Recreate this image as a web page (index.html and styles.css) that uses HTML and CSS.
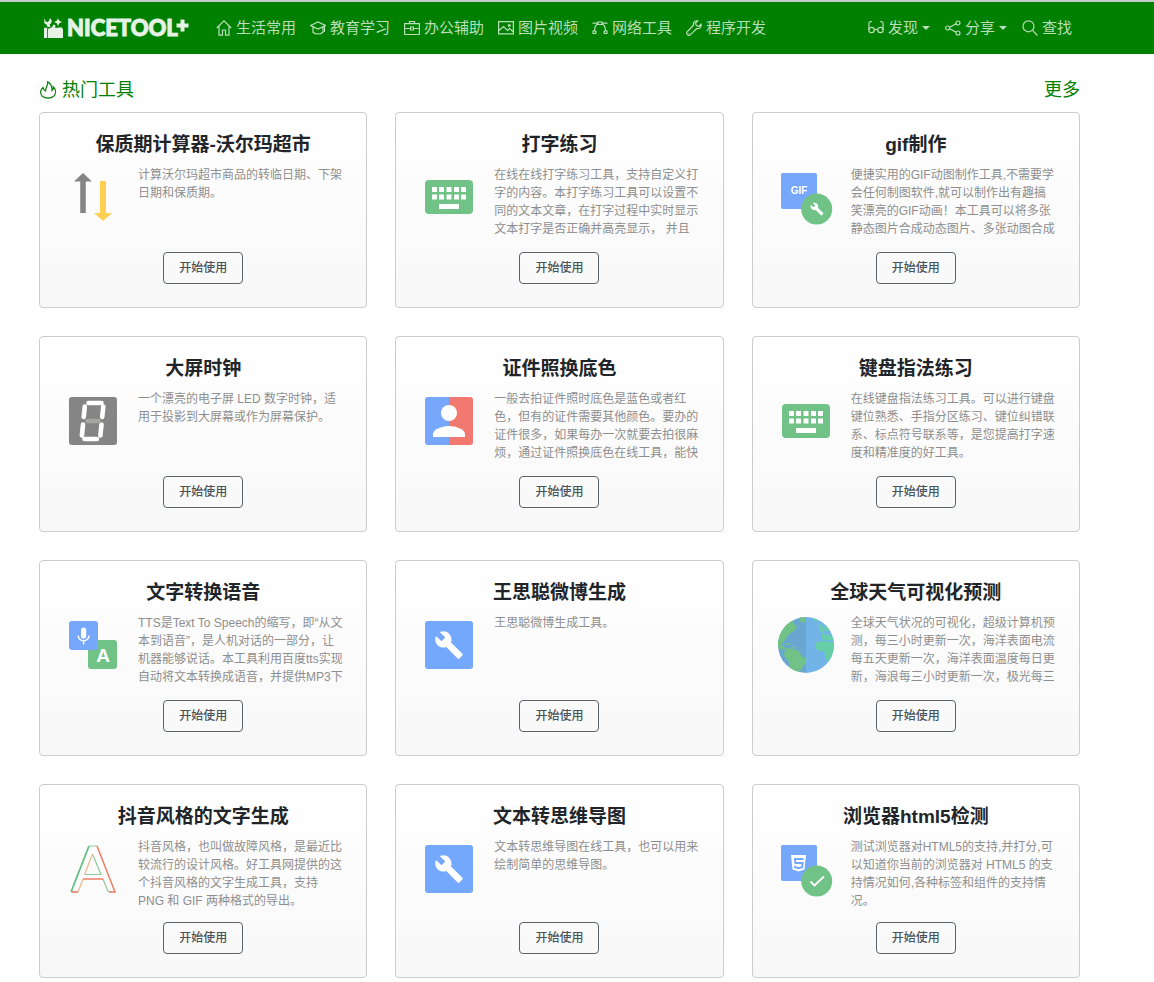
FILE: index.html
```html
<!DOCTYPE html>
<html lang="zh-CN">
<head>
<meta charset="utf-8">
<meta name="viewport" content="width=device-width, initial-scale=1">
<title>NICETOOL+ 好工具网</title>
<link rel="stylesheet" href="styles.css">
</head>
<body>
<svg class="symbols" aria-hidden="true">
  <symbol id="build" viewBox="0 0 24 24"><path fill="#fff" d="M22.7 19l-9.1-9.1c.9-2.3.4-5-1.5-6.9-2-2-5-2.4-7.4-1.3L9 6 6 9 1.6 4.7C.4 7.1.9 10.1 2.9 12.1c1.9 1.9 4.6 2.4 6.9 1.5l9.1 9.1c.4.4 1 .4 1.4 0l2.3-2.3c.5-.4.5-1.1.1-1.4z"/></symbol>
  <symbol id="keyboard" viewBox="0 0 56 56"><rect x="4" y="11" width="48" height="34" rx="4" fill="#71c287"/><path fill="#fff" d="M11 18h5v5h-5zM18 18h5v5h-5zM25.500 18h5v5h-5zM33 18h5v5h-5zM40 18h5v5h-5zM11 25.500h5v5h-5zM18 25.500h5v5h-5zM25.500 25.500h5v5h-5zM33 25.500h5v5h-5zM40 25.500h5v5h-5zM18 35h20v5H18z"/></symbol>
  <symbol id="tool" viewBox="0 0 56 56"><rect x="4" y="4" width="48" height="48" rx="3" fill="#74a8fd"/><use href="#build" x="13" y="13" width="30" height="30"/></symbol>
</svg>

<header class="site-header">
  <div class="container header-inner">
    <a class="brand" href="#">
      <svg class="brand-mark" viewBox="0 0 19 21" fill="currentColor" aria-hidden="true"><path d="M.5 0l1 3 1.500 1.200L5 3 6 0l1.800 2.500-.6 2.600-1.600 1.600 1 2.300H3.600L2.600 6.800.2 5zM14 .2l1.200 2.600 3 1.200-3 1.300L14 8l-1.200-2.700L10 4l2.800-1.200zM0 9.800h3.200V20H0zM4 11l4.200-2 1.300-2.500 1.900.8-.2 2.700 6.300-.8 1.700 2.300V20H4z"/></svg>
      <span class="brand-name">NICETOOL</span>
      <svg class="brand-plus" viewBox="0 0 13 13" fill="currentColor" aria-label="+"><path d="M4.500.5h4v4h4v4h-4v4h-4v-4h-4v-4h4z"/></svg>
    </a>
    <nav class="nav" aria-label="工具分类">
      <a href="#"><svg class="ico" viewBox="0 0 16 16"><path d="M.8 8L8 .9 15.200 8M3 6.500v8.700h3.500V10h3v5.200H13V6.500"/></svg>生活常用</a>
      <a href="#"><svg class="ico" viewBox="0 0 16 16"><path d="M.6 5.500L8 2l7.400 3.500L8 9zM3 7v5.200c2.500 2.400 7.500 2.400 10 0V7M14.500 6v6"/></svg>教育学习</a>
      <a href="#"><svg class="ico" viewBox="0 0 16 16"><path d="M.6 3.600h14.800v10.900H.6zM5.500 3.500v-2h5v2M.6 8.500h6M9.400 8.500h6M6.600 7h2.800v3H6.600z"/></svg>办公辅助</a>
      <a href="#"><svg class="ico" viewBox="0 0 16 16"><path d="M.6 1.600h14.800v12.200H.6zM1 10.500l4.500-4 4 4 2-2 4 3.500M10.500 4.800h1.500v1.400h-1.500z"/></svg>图片视频</a>
      <a href="#"><svg class="ico" viewBox="0 0 16 16"><path d="M6 2h4v2.500H6zM1 11h2.800v2.500H1zM12.200 11H15v2.500h-2.800zM6.500 3.500C4 4.500 2.500 7 2.400 11M9.500 3.500c2.500 1 4 3.500 4.100 7.500M.5 3.200H6M10 3.200h5.500"/></svg>网络工具</a>
      <a href="#"><svg class="ico" viewBox="0 0 16 16"><path d="M11.800.9c-2.500-.7-5 1.600-4.300 4.300L.9 12c-.9 2 1.100 4 3.100 3.100l6.800-6.600c2.700.7 5.100-1.800 4.300-4.300l-2.400 2.300-2.300-.9-.9-2.300zM2.500 13.500h1"/></svg>程序开发</a>
    </nav>
    <nav class="nav nav-end" aria-label="站点">
      <a href="#"><svg class="ico" viewBox="0 0 16 16"><path d="M3.800 1.600H2.400Q.9 1.600.9 3.500V10M12.200 1.600h1.400q1.500 0 1.500 1.900V10M6.300 10q1.700-1.200 3.400 0"/><circle cx="3.600" cy="10" r="2.700"/><circle cx="12.400" cy="10" r="2.700"/></svg>发现<span class="caret"></span></a>
      <a href="#"><svg class="ico" viewBox="0 0 16 16"><circle cx="2.700" cy="8" r="2"/><circle cx="13" cy="3" r="2"/><circle cx="13" cy="13" r="2"/><path d="M4.600 7.200L11 3.900M4.600 8.800L11 12.100"/></svg>分享<span class="caret"></span></a>
      <a href="#"><svg class="ico" viewBox="0 0 16 16"><circle cx="6.500" cy="6.300" r="5.500"/><path d="M10.500 10.300l5 5.200"/></svg>查找</a>
    </nav>
  </div>
</header>

<main class="container">
  <div class="section-head">
    <h2><svg class="ico ico-fire" viewBox="0 0 18 18"><path d="M4 6.500C1.500 8.500.7 12 3 14.800c2.800 3.100 9.200 3.100 12 0 2.300-2.700 1.900-6.300-.6-8.800.2 1.700-.4 2.900-1.400 3.600C13.200 6 11.500 2.200 8.600.9c.7 3-1.800 4.500-2 9.100C5.300 9.300 4.300 8.300 4 6.500z"/></svg>热门工具</h2>
    <a href="#">更多</a>
  </div>

  <section class="tools">
    <article class="card">
      <h3>保质期计算器-沃尔玛超市</h3>
      <div class="card-body">
        <svg class="pic" viewBox="0 0 56 56"><path fill="#858585" d="M18 4l9 8.500h-6.200V44h-5.600V12.500H9z"/><path fill="#ffd054" d="M35 12h6v32h6l-9 8-9-8h6z"/></svg>
        <p>计算沃尔玛超市商品的转临日期、下架日期和保质期。</p>
      </div>
      <button type="button">开始使用</button>
    </article>
    <article class="card">
      <h3>打字练习</h3>
      <div class="card-body">
        <svg class="pic"><use href="#keyboard"/></svg>
        <p>在线在线打字练习工具，支持自定义打字的内容。本打字练习工具可以设置不同的文本文章，在打字过程中实时显示文本打字是否正确并高亮显示， 并且</p>
      </div>
      <button type="button">开始使用</button>
    </article>
    <article class="card">
      <h3>gif制作</h3>
      <div class="card-body">
        <svg class="pic" viewBox="0 0 56 56"><rect x="3" y="4" width="36" height="36" rx="2" fill="#77a7fa"/><text class="pic-gif" x="21" y="25">GIF</text><circle cx="38.700" cy="40" r="15.500" fill="#71c287"/><use href="#build" x="32" y="33" width="14" height="14"/></svg>
        <p>便捷实用的GIF动图制作工具,不需要学会任何制图软件,就可以制作出有趣搞笑漂亮的GIF动画！本工具可以将多张静态图片合成动态图片、多张动图合成</p>
      </div>
      <button type="button">开始使用</button>
    </article>

    <article class="card">
      <h3>大屏时钟</h3>
      <div class="card-body">
        <svg class="pic" viewBox="0 0 56 56"><rect x="4" y="4" width="48" height="48" rx="3" fill="#858585"/><path fill="none" stroke="#fff" stroke-width="4.600" stroke-linecap="round" d="M23.500 10h13M19.800 13.500l-1.100 10.500M38.300 13.500l-1.100 10.500M18 31.500l-1.100 11M36.500 31.500l-1.100 11M19.500 46h12.500"/><path stroke="#a5a5a1" stroke-width="4.400" stroke-linecap="round" d="M22.500 28h11"/></svg>
        <p>一个漂亮的电子屏 LED 数字时钟，适用于投影到大屏幕或作为屏幕保护。</p>
      </div>
      <button type="button">开始使用</button>
    </article>
    <article class="card">
      <h3>证件照换底色</h3>
      <div class="card-body">
        <svg class="pic" viewBox="0 0 56 56"><path fill="#77a7fa" d="M28 4H7a3 3 0 0 0-3 3v42a3 3 0 0 0 3 3h21z"/><path fill="#f1796f" d="M28 4h21a3 3 0 0 1 3 3v42a3 3 0 0 1-3 3H28z"/><circle cx="28" cy="20" r="8" fill="#fff"/><path fill="#fff" d="M12 44v-3c0-5 10-8 16-8s16 3 16 8v3z"/></svg>
        <p>一般去拍证件照时底色是蓝色或者红色，但有的证件需要其他颜色。要办的证件很多，如果每办一次就要去拍很麻烦，通过证件照换底色在线工具，能快</p>
      </div>
      <button type="button">开始使用</button>
    </article>
    <article class="card">
      <h3>键盘指法练习</h3>
      <div class="card-body">
        <svg class="pic"><use href="#keyboard"/></svg>
        <p>在线键盘指法练习工具。可以进行键盘键位熟悉、手指分区练习、键位纠错联系、标点符号联系等，是您提高打字速度和精准度的好工具。</p>
      </div>
      <button type="button">开始使用</button>
    </article>

    <article class="card">
      <h3>文字转换语音</h3>
      <div class="card-body">
        <svg class="pic" viewBox="0 0 56 56"><rect x="23" y="23" width="29" height="29" rx="3" fill="#71c287"/><rect x="4" y="4" width="29" height="29" rx="3" fill="#77a7fa"/><rect x="16" y="10.500" width="5.200" height="11" rx="2.600" fill="#fff"/><path fill="none" stroke="#fff" stroke-width="1.400" d="M13.200 18.500a5.400 5.400 0 0 0 10.800 0M18.600 24v3.500"/><text class="pic-a" x="38" y="45">A</text></svg>
        <p>TTS是Text To Speech的缩写，即“从文本到语音”，是人机对话的一部分，让机器能够说话。本工具利用百度tts实现自动将文本转换成语音，并提供MP3下</p>
      </div>
      <button type="button">开始使用</button>
    </article>
    <article class="card">
      <h3>王思聪微博生成</h3>
      <div class="card-body">
        <svg class="pic"><use href="#tool"/></svg>
        <p>王思聪微博生成工具。</p>
      </div>
      <button type="button">开始使用</button>
    </article>
    <article class="card">
      <h3>全球天气可视化预测</h3>
      <div class="card-body">
        <svg class="pic" viewBox="0 0 56 56"><clipPath id="disc"><circle cx="28" cy="28" r="28"/></clipPath><g clip-path="url(#disc)"><path fill="#6aa6d2" d="M0 0h28v56H0z"/><path fill="#72b4e8" d="M28 0h28v56H28z"/><path fill="#71c287" d="M14 4l2 3 3 2-2 4-4 3-3 2-2 4-2 1 0 3-2 0-1 3 3 0 1 3-3 1-6-3V14zM7 32l3-1 7 1 5 3 1 4 5 2v5l-3 3-2 4-4 3-4-2-4-5 0-4-5-6zM22 0h6v4l-3 2-3-2zM5 26l5 0 4 2-4 0zM14 30l4 0 0 1-4 0z"/><path fill="#67cfa8" d="M40 25l4-1 5 0 4 1 5 0v17h-5l-3 2-3-2 0-6-3-2-5-1-2-4 1-3zM43 16l5 2 5-1-1 3 5 0v3h-8l-5-1zM40 8l4 0 1 3 2 3-4 2-1-4zM46 10l3-3 8 4v7l-6-4-3 0zM36 1l5 1-3 3-3-2z"/></g></svg>
        <p>全球天气状况的可视化，超级计算机预测，每三小时更新一次，海洋表面电流每五天更新一次，海洋表面温度每日更新，海浪每三小时更新一次，极光每三</p>
      </div>
      <button type="button">开始使用</button>
    </article>

    <article class="card">
      <h3>抖音风格的文字生成</h3>
      <div class="card-body">
        <svg class="pic" viewBox="0 0 56 56" fill="none" stroke-width="1.200"><path stroke="#63bf80" stroke-width="1.800" d="M24 5L6 51"/><path stroke="#8ecb99" d="M24 5h8M27.500 13l8.500 20.500H20M38 38l5 12.500h4M6 51h7"/><path stroke="#f3b58a" d="M27.500 13l-8 20.500M13 51l5-13"/><path stroke="#ee7d63" stroke-width="1.500" d="M32 5l18 46h-6M18 38h20M7 51h6"/></svg>
        <p>抖音风格，也叫做故障风格，是最近比较流行的设计风格。好工具网提供的这个抖音风格的文字生成工具，支持<br>PNG 和 GIF 两种格式的导出。</p>
      </div>
      <button type="button">开始使用</button>
    </article>
    <article class="card">
      <h3>文本转思维导图</h3>
      <div class="card-body">
        <svg class="pic"><use href="#tool"/></svg>
        <p>文本转思维导图在线工具，也可以用来绘制简单的思维导图。</p>
      </div>
      <button type="button">开始使用</button>
    </article>
    <article class="card">
      <h3>浏览器html5检测</h3>
      <div class="card-body">
        <svg class="pic" viewBox="0 0 56 56"><rect x="3" y="4" width="36" height="36" rx="2" fill="#77a7fa"/><path fill="#fff" d="M13 14h15l-1.500 14.500-6 2-6-2z"/><path fill="none" stroke="#77a7fa" stroke-width="2" d="M25.500 18h-8.500l.4 4h7.300l-.6 4.300-3.600 1-3.300-1-.1-1.500"/><circle cx="38.700" cy="40" r="15.500" fill="#71c287"/><path fill="none" stroke="#fff" stroke-width="1.800" d="M32.500 40.500l4 4 9.500-9"/></svg>
        <p>测试浏览器对HTML5的支持,并打分,可以知道你当前的浏览器对 HTML5 的支持情况如何,各种标签和组件的支持情况。</p>
      </div>
      <button type="button">开始使用</button>
    </article>
  </section>
</main>
</body>
</html>
```

FILE: styles.css
```css
* {
  box-sizing: border-box;
}

body {
  margin: 0;
  background: #fff;
  color: #212529;
  font-family: "Liberation Sans", "Noto Sans CJK SC", sans-serif;
  text-spacing-trim: space-all;
}

a {
  color: inherit;
  text-decoration: none;
}

h2,
h3,
p {
  margin: 0;
}

.symbols {
  position: absolute;
  width: 0;
  height: 0;
}

.container {
  padding: 0 74px 0 39px;
}

.site-header {
  border-top: 2px solid #c8cbc8;
  background: #008000;
  color: #b9deb9;
}

.header-inner {
  display: flex;
  align-items: center;
  height: 52px;
}

.brand {
  display: flex;
  align-items: center;
  width: 177px;
  padding-left: 5px;
  color: #e5f2e5;
}

.brand-mark {
  width: 19px;
  height: 21px;
  margin-right: 4px;
}

.brand-name {
  font: 900 22px/24px Lato, sans-serif;
  -webkit-text-stroke: 1px currentColor;
}

.brand-plus {
  width: 13px;
  height: 13px;
  margin: 0 0 6px -2px;
}

.nav {
  display: flex;
  gap: 14px;
  font-size: 15px;
  line-height: 24px;
}

.nav-end {
  gap: 15px;
  margin-left: auto;
  padding-right: 8px;
}

.nav a {
  display: flex;
  align-items: center;
  white-space: nowrap;
}

.ico {
  flex: none;
  width: 16px;
  height: 16px;
  margin-right: 4px;
  fill: none;
  stroke: currentColor;
  stroke-width: 1.2;
}

.caret {
  margin-left: 4px;
  border: 4px solid transparent;
  border-top-color: currentColor;
  border-bottom: 0;
}

.section-head {
  display: flex;
  justify-content: space-between;
  align-items: center;
  padding: 22px 0 8px;
  color: #008000;
  font-size: 18px;
  line-height: 28px;
}

.section-head h2 {
  display: flex;
  align-items: center;
  font-size: 18px;
  font-weight: 400;
}

.ico-fire {
  width: 18px;
  height: 18px;
  margin-right: 5px;
}

.tools {
  display: grid;
  grid-template-columns: repeat(3, 1fr);
  gap: 28px;
}

.card {
  display: flex;
  flex-direction: column;
  align-items: center;
  padding: 17px 22px 23px;
  border: 1px solid #ccc;
  border-radius: 4px;
  background: linear-gradient(#fff, #f8f8f8);
}

.card h3 {
  font-size: 19px;
  font-weight: 700;
  line-height: 30px;
}

.card-body {
  display: flex;
  align-items: flex-start;
  gap: 17px;
  width: 100%;
  height: 74px;
  margin: 6px 0 12px;
  padding-left: 3px;
}

.card:nth-last-child(-n + 3) .card-body {
  height: 72px;
}

.pic {
  flex: none;
  width: 56px;
  height: 56px;
  margin-top: 3px;
}

.pic-gif,
.pic-a {
  fill: #fff;
  font-family: "Liberation Sans", sans-serif;
  font-weight: 700;
  text-anchor: middle;
}

.pic-gif {
  font-size: 10px;
}

.pic-a {
  font-size: 19px;
}

.card p {
  flex: 1;
  color: #8e8e8e;
  font-size: 12px;
  line-height: 18px;
}

.card button {
  width: 80px;
  height: 32px;
  padding: 0;
  border: 1px solid #5a6268;
  border-radius: 4px;
  background: transparent;
  color: #4b5359;
  font: 500 12px/18px "Liberation Sans", "Noto Sans CJK SC", sans-serif;
}
```
